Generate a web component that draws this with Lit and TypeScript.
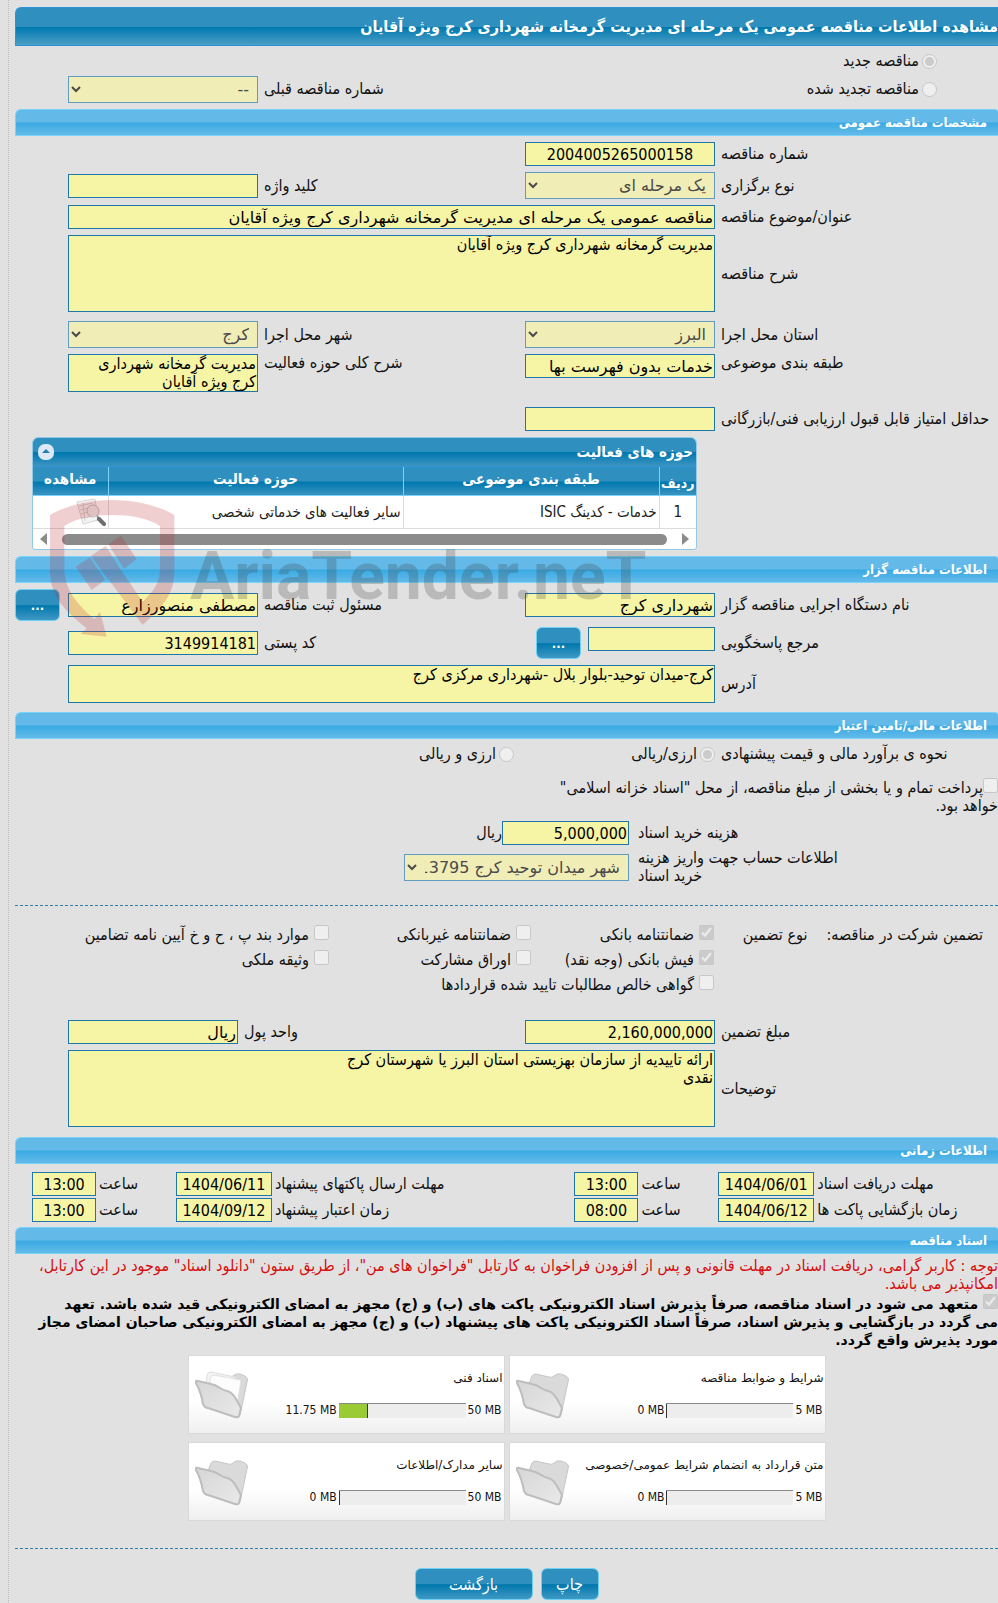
import { LitElement, html, css, svg, nothing } from 'lit';
import { customElement, property } from 'lit/decorators.js';

interface Attachment {
  title: string;
  used: number;
  limit: number;
}

const ATTACHMENTS: Attachment[] = [
  { title: 'شرایط و ضوابط مناقصه', used: 0, limit: 5 },
  { title: 'اسناد فنی', used: 11.75, limit: 50 },
  { title: 'متن قرارداد به انضمام شرایط عمومی/خصوصی', used: 0, limit: 5 },
  { title: 'سایر مدارک/اطلاعات', used: 0, limit: 50 },
];

const GUARANTEES = [
  { id: 'g-bank', text: 'ضمانتنامه بانکی', checked: true },
  { id: 'g-nonbank', text: 'ضمانتنامه غیربانکی', checked: false },
  { id: 'g-clauses', text: 'موارد بند پ ، ح و خ آیین نامه تضامین', checked: false },
  { id: 'g-cash', text: 'فیش بانکی (وجه نقد)', checked: true },
  { id: 'g-bonds', text: 'اوراق مشارکت', checked: false },
  { id: 'g-estate', text: 'وثیقه ملکی', checked: false },
];

const DATES = [
  { id: 'd-receive', text: 'مهلت دریافت اسناد', date: '1404/06/01', hour: '13:00' },
  { id: 'd-send', text: 'مهلت ارسال پاکتهای پیشنهاد', date: '1404/06/11', hour: '13:00' },
  { id: 'd-open', text: 'زمان بازگشایی پاکت ها', date: '1404/06/12', hour: '08:00' },
  { id: 'd-valid', text: 'زمان اعتبار پیشنهاد', date: '1404/09/12', hour: '13:00' },
];

/** Folder card with a used / allowed size bar. */
@customElement('attachment-card')
export class AttachmentCard extends LitElement {
  static styles = css`
    :host {
      display: flex;
      align-items: flex-start;
      gap: 8px;
      direction: ltr;
      height: 79px;
      box-sizing: border-box;
      padding: 14px 1px 0 6px;
      border: 1px solid #d9d9d9;
      background: linear-gradient(#fff 0%, #fff 60%, #efefef 100%);
      font-size: 12px;
      line-height: 16px;
    }

    svg {
      flex: none;
      width: 54px;
      height: 52px;
    }

    .body {
      flex: 1;
      min-width: 0;
    }

    .title {
      direction: rtl;
      font-family: 'DejaVu Sans', sans-serif;
      white-space: nowrap;
    }

    .usage {
      display: flex;
      justify-content: flex-end;
      align-items: center;
      gap: 2px;
      margin-top: 16px;
      padding-right: 1px;
    }

    .bar {
      width: 127px;
      height: 15px;
      box-sizing: border-box;
      border-top: 1px solid #8a8a8a;
      background: #ededed;
    }

    .fill {
      height: 100%;
      box-sizing: border-box;
      min-width: 1px;
      border-right: 1px solid #333;
      background: #9acb34;
    }
  `;

  @property({ attribute: false }) item: Attachment = ATTACHMENTS[0];

  render() {
    const { title, used, limit } = this.item;
    return html`
      <svg viewBox="0 0 54 52" aria-hidden="true">
        <defs>
          <linearGradient id="front" x1="0" y1="0" x2="1" y2="1">
            <stop offset="0" stop-color="#d6d6d6" />
            <stop offset="1" stop-color="#e9e9e9" />
          </linearGradient>
        </defs>
        <path d="M13 14 L16 6 Q17 4 20 4 L33 7 Q36 8 38 6 Q41 3 45 4 L50 6 Q54 8 52 12 L45 45 Q43 47 41 45 L18 32 Z"
          fill="#dadada" stroke="#c6c6c6" />
        ${used > 0
          ? svg`
            <path d="M11 15 L12 5 Q13 2 16 2 L40 7 L38 40 L18 30 Z" fill="#f4f4f4" stroke="#dedede" />
            <path d="M15 17 L15 8 Q16 5 19 5 L46 10 L41 42 Z" fill="#fcfcfc" stroke="#e0e0e0" />`
          : nothing}
        <path d="M1 13 Q0 10 3 11 L16 14 Q21 15 25 18 Q28 20 32 21 Q37 22 41 29 L46 38 L44 46 Q43 48 40 47 L13 38 Q10 38 8 34 Q6 22 1 13 Z"
          fill="url(#front)" stroke="#bdbdbd" stroke-width="2" stroke-linejoin="round" />
      </svg>
      <div class="body">
        <div class="title">${title}</div>
        <div class="usage">
          <span>${used} MB</span>
          <div class="bar" role="meter" aria-label=${title}
            aria-valuemin="0" aria-valuemax=${limit} aria-valuenow=${used}>
            <div class="fill" style="width: ${(used / limit) * 100}%"></div>
          </div>
          <span>${limit} MB</span>
        </div>
      </div>
    `;
  }
}

@customElement('app-root')
export class AppRoot extends LitElement {
  static styles = css`
    :host {
      display: block;
      position: relative;
      overflow: hidden;
      direction: rtl;
      background: #e1e1e1;
      color: #111;
      font-family: 'DejaVu Sans Condensed', 'DejaVu Sans', sans-serif;
      font-size: 16px;
      line-height: 18px;
    }

    .page {
      margin-left: 8px;
      padding: 7px 0 5px 6px;
      border-left: 1px dotted #bdbdbd;
    }

    input,
    select,
    textarea,
    button {
      box-sizing: border-box;
      margin: 0;
      font-family: inherit;
      border-radius: 0;
    }

    .title {
      box-sizing: border-box;
      height: 39px;
      margin: 0;
      border: 1px solid #2e94d6;
      border-right: 0;
      border-radius: 6px 0 0 0;
      background: linear-gradient(#2f90bf 0%, #2f90bf 50%, #0078ae 52%, #4b9ec6 100%);
      color: #fff;
      font-size: 16px;
      line-height: 37px;
      white-space: nowrap;
    }

    .section {
      box-sizing: border-box;
      height: 27px;
      margin: 0;
      padding-right: 11px;
      border: 1px solid #79d3f8;
      border-right: 0;
      border-radius: 6px 3px 0 0;
      background: linear-gradient(#63bae9 0%, #63bae9 48%, #3aaae3 52%, #63bae9 100%);
      color: #fff;
      font-size: 13px;
      line-height: 26px;
    }

    .fields {
      display: grid;
      gap: 6px;
    }

    .details {
      padding-top: 6px;
    }

    .owner {
      padding: 6px 0 9px;
    }

    .costs {
      gap: 4px;
      padding-bottom: 20px;
    }

    .amounts {
      padding-bottom: 10px;
    }

    .row {
      display: grid;
      grid-template-columns: minmax(0, 277fr) 190px minmax(0, 255fr) 190px 47px;
      column-gap: 6px;
      align-items: center;
    }

    .row > label,
    .row > .label {
      text-align: left;
    }

    .wide {
      grid-column: span 3;
    }

    .start {
      align-items: start;
    }

    .after {
      margin-top: 3px;
    }

    .spaced {
      margin-top: 9px;
    }

    input.text,
    textarea {
      display: block;
      width: 100%;
      padding: 0 1px;
      border: 1px solid #1f77a8;
      background: #f6f4a5;
      color: #000;
      outline: none;
    }

    input.text {
      height: 24px;
      font-family: 'DejaVu Sans', sans-serif;
      font-size: 16px;
    }

    input.num {
      font-family: inherit;
    }

    input.center {
      text-align: center;
    }

    textarea {
      resize: none;
      overflow: hidden;
      font-size: 16px;
      line-height: 18px;
    }

    textarea.tall {
      height: 77px;
    }

    select {
      display: block;
      width: 100%;
      height: 27px;
      padding: 0 4px;
      border: 1px solid #5f9cc0;
      background-color: #f0edb6;
      color: #4a4a4a;
      font-family: 'DejaVu Sans', sans-serif;
      font-size: 16px;
    }

    select:disabled {
      opacity: 1;
    }

    input[type='radio'],
    input[type='checkbox'] {
      flex: none;
      width: 15px;
      height: 15px;
    }

    .choice {
      display: flex;
      align-items: center;
      gap: 3px;
    }

    .kind {
      padding: 1px 0 6px;
    }

    .kind .row {
      height: 28px;
    }

    .kind .choice {
      grid-column: span 2;
      padding-right: 61px;
    }

    .btn {
      height: 32px;
      padding: 0;
      border: 1px solid #6fd0f6;
      border-radius: 6px;
      background: linear-gradient(#2f90bf 0%, #2f90bf 50%, #0078ae 52%, #3f98c3 100%);
      color: #fff;
      font-size: 16px;
    }

    .more {
      flex: none;
      width: 45px;
      font-size: 13px;
      font-weight: bold;
    }

    .row > .more {
      justify-self: end;
    }

    .lookup {
      display: flex;
      align-items: flex-start;
      gap: 7px;
    }

    .lookup input {
      width: 127px;
    }

    /* activity grid */

    .panel {
      margin: 6px 301px 6px 17px;
      border: 1px solid #93c9e6;
      border-radius: 6px 6px 3px 3px;
      overflow: hidden;
      background: #fff;
    }

    .caption {
      display: flex;
      justify-content: space-between;
      align-items: center;
      height: 28px;
      padding: 0 3px 0 5px;
      background: linear-gradient(#2f90bf 0%, #2f90bf 48%, #0078ae 52%, #3c94c2 100%);
      color: #fff;
      font-size: 15px;
      font-weight: bold;
    }

    .caption button {
      width: 16px;
      height: 16px;
      padding: 0;
      border: 0;
      background: none;
    }

    .caption svg {
      display: block;
      width: 16px;
      height: 16px;
    }

    table {
      width: 100%;
      border-collapse: collapse;
      table-layout: fixed;
    }

    th {
      height: 28px;
      padding: 0;
      border-top: 1px solid #2e94d6;
      border-bottom: 1px solid #79d3f8;
      background: linear-gradient(#2f90bf 0%, #2f90bf 48%, #0078ae 52%, #3c94c2 100%);
      color: #fff;
      font-size: 15px;
      line-height: 24px;
      vertical-align: top;
    }

    th:first-child {
      font-size: 14px;
      vertical-align: bottom;
    }

    th + th {
      border-right: 1px solid #79d3f8;
    }

    td {
      height: 32px;
      padding: 0 2px;
      border-bottom: 1px solid #dcdcdc;
      color: #222;
      font-size: 15px;
    }

    td + td {
      border-right: 1px solid #dcdcdc;
    }

    td:first-child {
      text-align: center;
    }

    td svg {
      display: block;
      width: 30px;
      height: 29px;
    }

    .c-row {
      width: 37px;
    }

    .c-class {
      width: 256px;
    }

    .c-view {
      width: 75px;
    }

    .scroll {
      display: flex;
      align-items: center;
      gap: 15px;
      height: 20px;
      padding: 0 7px;
    }

    .thumb {
      flex: 1;
      height: 11px;
      border-radius: 6px;
      background: #8b8b8b;
    }

    .arrow {
      border: 6px solid transparent;
      border-left: 7px solid #8b8b8b;
      border-right: 0;
    }

    .arrow.left {
      border-left: 0;
      border-right: 7px solid #8b8b8b;
    }

    /* finance */

    .radios {
      display: grid;
      grid-template-columns: minmax(0, 277fr) minmax(0, 195fr) minmax(0, 499fr);
      column-gap: 6px;
      padding-top: 6px;
    }

    .radios .label {
      text-align: left;
    }

    .treasury {
      margin: 15px 0 6px;
    }

    .treasury input,
    .pledge input {
      vertical-align: 0;
    }

    .cost {
      display: grid;
      grid-template-columns: minmax(0, 360fr) minmax(0, 614fr);
      column-gap: 9px;
      align-items: center;
    }

    .cost label {
      text-align: left;
    }

    .cost label.block {
      justify-self: end;
      text-align: right;
    }

    .cost .money {
      display: flex;
      align-items: center;
    }

    .cost input {
      width: 127px;
    }

    .cost select {
      width: 225px;
    }

    .rule {
      margin: 0;
      border: 0;
      border-top: 1px dashed #2a80ab;
    }

    .guarantee {
      display: grid;
      grid-template-columns: minmax(0, 284fr) minmax(0, 699fr);
      padding: 16px 0 23px;
    }

    .guarantee .lead {
      display: flex;
      gap: 19px;
      padding-right: 15px;
      line-height: 26px;
    }

    .types {
      display: grid;
      grid-template-columns: 183px 202px auto;
    }

    .types .choice {
      gap: 5px;
      height: 25px;
    }

    .types input {
      margin-bottom: 4px;
    }

    .types .choice:last-child {
      grid-column: span 3;
    }

    .currency {
      display: flex;
      align-items: center;
      justify-content: flex-end;
      gap: 6px;
      grid-column: span 2;
    }

    .currency input {
      width: 170px;
    }

    /* timing */

    .dates {
      display: grid;
      grid-template-columns: minmax(0, 181fr) 96px minmax(0, 74fr) 64px minmax(0, 297fr) 96px minmax(0, 74fr) 64px;
      gap: 2px 3px;
      align-items: center;
      padding: 8px 0 5px 17px;
    }

    .dates label {
      text-align: left;
    }

    /* documents */

    .notice {
      margin: 3px 0 0;
      color: #d80d0d;
    }

    .pledge {
      margin: 1px 0 6px;
      color: #000;
      font-family: 'DejaVu Sans', sans-serif;
      font-size: 14px;
      font-weight: bold;
    }

    .cards {
      display: grid;
      grid-template-columns: repeat(2, 317px);
      gap: 8px 4px;
      justify-content: center;
      margin-bottom: 27px;
    }

    .actions {
      display: flex;
      justify-content: center;
      gap: 8px;
      padding-top: 19px;
    }

    .print {
      width: 58px;
    }

    .back {
      width: 118px;
    }

    /* site watermark over the page */

    .watermark {
      position: absolute;
      top: 490px;
      left: 40px;
      display: flex;
      direction: ltr;
      pointer-events: none;
    }

    .watermark svg {
      flex: none;
      width: 150px;
      height: 155px;
    }

    .watermark span {
      padding-top: 42px;
      color: rgba(60, 60, 60, 0.24);
      font-family: Roboto, sans-serif;
      font-size: 66px;
      font-weight: bold;
      line-height: 90px;
    }
  `;

  #input(id: string, value = '', extra = '') {
    return html`<input class="text ${extra}" id=${id} type="text" .value=${value} readonly>`;
  }

  #select(id: string, value: string) {
    return html`<select id=${id} disabled><option selected>${value}</option></select>`;
  }

  #check(id: string, text: string, checked: boolean) {
    return html`
      <div class="choice">
        <input type="checkbox" id=${id} ?checked=${checked} disabled>
        <label for=${id}>${text}</label>
      </div>
    `;
  }

  #radio(name: string, id: string, text: string, checked: boolean) {
    return html`
      <div class="choice">
        <input type="radio" name=${name} id=${id} ?checked=${checked} disabled>
        <label for=${id}>${text}</label>
      </div>
    `;
  }

  #kind() {
    return html`
      <div class="kind">
        <div class="row">${this.#radio('kind', 'kind-new', 'مناقصه جدید', true)}</div>
        <div class="row">
          ${this.#radio('kind', 'kind-renewed', 'مناقصه تجدید شده', false)}
          <label for="previous">شماره مناقصه قبلی</label>
          ${this.#select('previous', '--')}
        </div>
      </div>
    `;
  }

  #details() {
    return html`
      <h2 class="section">مشخصات مناقصه عمومی</h2>
      <div class="fields details">
        <div class="row">
          <label for="number">شماره مناقصه</label>
          ${this.#input('number', '2004005265000158', 'num center')}
        </div>
        <div class="row">
          <label for="method">نوع برگزاری</label>
          ${this.#select('method', 'یک مرحله ای')}
          <label for="keyword">کلید واژه</label>
          ${this.#input('keyword')}
        </div>
        <div class="row">
          <label for="subject">عنوان/موضوع مناقصه</label>
          <div class="wide">
            ${this.#input('subject', 'مناقصه عمومی یک مرحله ای مدیریت گرمخانه شهرداری کرج ویژه آقایان')}
          </div>
        </div>
        <div class="row">
          <label for="summary">شرح مناقصه</label>
          <textarea class="wide tall" id="summary" readonly
            .value=${'مدیریت گرمخانه شهرداری کرج ویژه آقایان'}></textarea>
        </div>
        <div class="row after">
          <label for="province">استان محل اجرا</label>
          ${this.#select('province', 'البرز')}
          <label for="city">شهر محل اجرا</label>
          ${this.#select('city', 'کرج')}
        </div>
        <div class="row start">
          <label for="category">طبقه بندی موضوعی</label>
          ${this.#input('category', 'خدمات بدون فهرست بها')}
          <label for="scope">شرح کلی حوزه فعالیت</label>
          <textarea id="scope" rows="2" readonly
            .value=${'مدیریت گرمخانه شهرداری کرج ویژه آقایان'}></textarea>
        </div>
        <div class="row spaced">
          <label for="score">حداقل امتیاز قابل قبول ارزیابی فنی/بازرگانی</label>
          ${this.#input('score')}
        </div>
      </div>
    `;
  }

  #activities() {
    return html`
      <div class="panel">
        <div class="caption">
          <span>حوزه های فعالیت</span>
          <button type="button" aria-label="بستن">
            <svg viewBox="0 0 16 16">
              <rect width="16" height="16" rx="7" fill="#dde9f6" />
              <path d="M4 9 L8 5 L12 9 Z" fill="#1f7fb2" />
            </svg>
          </button>
        </div>
        <table>
          <colgroup>
            <col class="c-row"><col class="c-class"><col><col class="c-view">
          </colgroup>
          <thead>
            <tr><th>ردیف</th><th>طبقه بندی موضوعی</th><th>حوزه فعالیت</th><th>مشاهده</th></tr>
          </thead>
          <tbody>
            <tr>
              <td>1</td>
              <td>خدمات - کدینگ ISIC</td>
              <td>سایر فعالیت های خدماتی شخصی</td>
              <td>
                <svg viewBox="0 0 30 29" aria-hidden="true">
                  <path d="M1 4 L19 1 L22 22 L7 26 Z" fill="#f4f4f4" stroke="#d4d4d4" />
                  <path d="M3 8 L17 5 M4 12 L12 10 M5 16 L12 14 M6 20 L14 19 M7 5 L9 23" stroke="#cfcfcf" fill="none" />
                  <circle cx="17" cy="13" r="6" fill="#ececec" stroke="#bdbdbd" stroke-width="1" />
                  <path d="M21 18 L24 21" stroke="#9a9a9a" stroke-width="2" />
                  <path d="M23 21 L28 26" stroke="#6e6e6e" stroke-width="4" stroke-linecap="round" />
                </svg>
              </td>
            </tr>
          </tbody>
        </table>
        <div class="scroll">
          <i class="arrow"></i>
          <div class="thumb"></div>
          <i class="arrow left"></i>
        </div>
      </div>
    `;
  }

  #owner() {
    return html`
      <h2 class="section">اطلاعات مناقصه گزار</h2>
      <div class="fields owner">
        <div class="row">
          <label for="agency">نام دستگاه اجرایی مناقصه گزار</label>
          ${this.#input('agency', 'شهرداری کرج')}
          <label for="registrar">مسئول ثبت مناقصه</label>
          ${this.#input('registrar', 'مصطفی منصورزارع')}
          <button class="btn more" type="button">...</button>
        </div>
        <div class="row">
          <label for="contact">مرجع پاسخگویی</label>
          <div class="lookup">
            ${this.#input('contact')}
            <button class="btn more" type="button">...</button>
          </div>
          <label for="postal">کد پستی</label>
          ${this.#input('postal', '3149914181', 'num')}
        </div>
        <div class="row">
          <label for="address">آدرس</label>
          <textarea class="wide" id="address" rows="2" readonly
            .value=${'کرج-میدان توحید-بلوار بلال -شهرداری مرکزی کرج'}></textarea>
        </div>
      </div>
    `;
  }

  #finance() {
    return html`
      <h2 class="section">اطلاعات مالی/تامین اعتبار</h2>
      <div class="radios">
        <span class="label">نحوه ی برآورد مالی و قیمت پیشنهادی</span>
        ${this.#radio('estimate', 'estimate-either', 'ارزی/ریالی', true)}
        ${this.#radio('estimate', 'estimate-both', 'ارزی و ریالی', false)}
      </div>
      <div class="treasury">
        <input type="checkbox" id="treasury" disabled><label for="treasury">پرداخت تمام و یا بخشی از مبلغ مناقصه، از محل "اسناد خزانه اسلامی"<br>خواهد بود.</label>
      </div>
      <div class="fields costs">
        <div class="cost">
          <label for="price">هزینه خرید اسناد</label>
          <div class="money">${this.#input('price', '5,000,000', 'num')}<span>ریال</span></div>
        </div>
        <div class="cost">
          <label for="account">اطلاعات حساب جهت واریز هزینه<br>خرید اسناد</label>
          ${this.#select('account', 'شهر میدان توحید کرج 13795')}
        </div>
      </div>
      <hr class="rule">
      <div class="guarantee">
        <div class="lead"><span>تضمین شرکت در مناقصه:</span><span>نوع تضمین</span></div>
        <div class="types">
          ${GUARANTEES.map((g) => this.#check(g.id, g.text, g.checked))}
          ${this.#check('g-claims', 'گواهی خالص مطالبات تایید شده قراردادها', false)}
        </div>
      </div>
      <div class="fields amounts">
        <div class="row">
          <label for="amount">مبلغ تضمین</label>
          ${this.#input('amount', '2,160,000,000', 'num')}
          <div class="currency">
            <label for="currency">واحد پول</label>
            ${this.#input('currency', 'ریال')}
          </div>
        </div>
        <div class="row">
          <label for="notes">توضیحات</label>
          <textarea class="wide tall" id="notes" readonly
            .value=${'ارائه تاییدیه از سازمان بهزیستی استان البرز یا شهرستان کرج\nنقدی'}></textarea>
        </div>
      </div>
    `;
  }

  #timing() {
    return html`
      <h2 class="section">اطلاعات زمانی</h2>
      <div class="dates">
        ${DATES.map((d) => html`
          <label for=${d.id}>${d.text}</label>
          ${this.#input(d.id, d.date, 'num center')}
          <label for="${d.id}-hour">ساعت</label>
          ${this.#input(`${d.id}-hour`, d.hour, 'num center')}
        `)}
      </div>
    `;
  }

  #documents() {
    return html`
      <h2 class="section">اسناد مناقصه</h2>
      <p class="notice">
        توجه : کاربر گرامی، دریافت اسناد در مهلت قانونی و پس از افزودن فراخوان به کارتابل "فراخوان های من"، از طریق ستون "دانلود اسناد" موجود در این کارتابل،<br>امکانپذیر می باشد.
      </p>
      <div class="pledge">
        <input type="checkbox" id="pledge" checked disabled>
        <label for="pledge">متعهد می شود در اسناد مناقصه، صرفاً پذیرش اسناد الکترونیکی پاکت های (ب) و (ج) مجهز به امضای الکترونیکی قید شده باشد. تعهد<br>می گردد در بازگشایی و پذیرش اسناد، صرفاً اسناد الکترونیکی پاکت های پیشنهاد (ب) و (ج) مجهز به امضای الکترونیکی صاحبان امضای مجاز<br>مورد پذیرش واقع گردد.</label>
      </div>
      <div class="cards">
        ${ATTACHMENTS.map((item) => html`<attachment-card .item=${item}></attachment-card>`)}
      </div>
    `;
  }

  #watermark() {
    return html`
      <div class="watermark" aria-hidden="true">
        <svg viewBox="0 0 450 465" fill="#b9252f" fill-opacity="0.22">
          <path d="M30 75 C72 50 140 30 216 30 C292 30 362 50 403 75 L403 245 C403 315 365 350 308 405 L205 268 L243 240 L308 335 C345 300 360 275 360 235 L360 108 C325 84 270 75 216 75 C162 75 108 84 73 108 L73 240 C75 300 110 340 163 388 L180 365 L200 440 L122 432 L140 415 C80 365 32 325 30 245 Z" />
          <path d="M107 230 L150 202 L195 270 L155 300 Z" />
          <path d="M153 198 L197 167 L243 240 L203 268 Z" />
          <path d="M205 163 L243 137 L290 207 L252 236 Z" />
        </svg>
        <span>AriaTender.neT</span>
      </div>
    `;
  }

  render() {
    return html`
      <div class="page">
        <h1 class="title">مشاهده اطلاعات مناقصه عمومی یک مرحله ای مدیریت گرمخانه شهرداری کرج ویژه آقایان</h1>
        ${this.#kind()}
        ${this.#details()}
        ${this.#activities()}
        ${this.#owner()}
        ${this.#finance()}
        ${this.#timing()}
        ${this.#documents()}
        <hr class="rule">
        <div class="actions">
          <button class="btn print" type="button">چاپ</button>
          <button class="btn back" type="button">بازگشت</button>
        </div>
      </div>
      ${this.#watermark()}
    `;
  }
}

declare global {
  interface HTMLElementTagNameMap {
    'app-root': AppRoot;
    'attachment-card': AttachmentCard;
  }
}
